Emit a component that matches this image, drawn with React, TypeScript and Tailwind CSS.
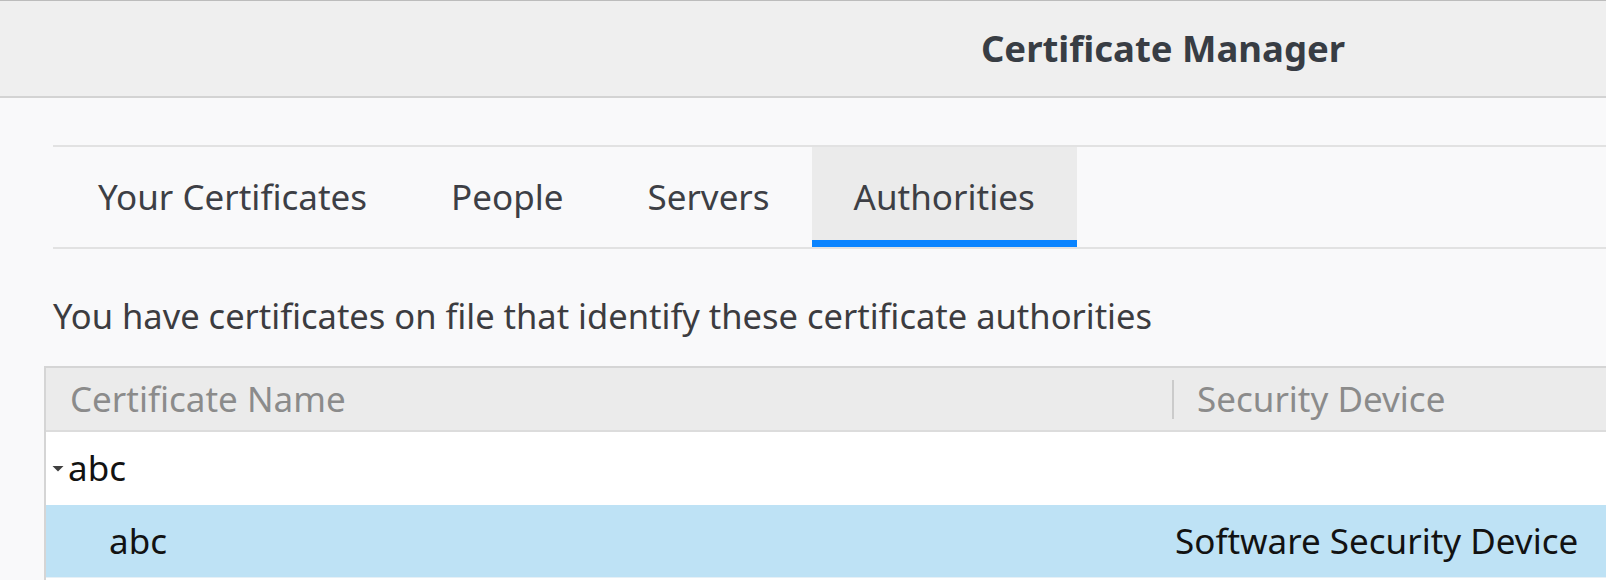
import { useState } from 'react'

const tabs = ['Your Certificates', 'People', 'Servers', 'Authorities']

function Twisty() {
  return (
    <svg width="12" height="7" viewBox="0 0 12 7" className="shrink-0">
      <path d="M0.5 1 L11.5 1 L6 6.5 Z" fill="#3f3f3f" />
    </svg>
  )
}

export default function App() {
  const [active, setActive] = useState('Authorities')

  return (
    <div className="h-[580px] w-full overflow-hidden bg-[#f9f9fa] font-['Noto_Sans','Open_Sans',sans-serif]">
      <div className="w-[2326px]">
        <header className="flex h-[98px] items-center justify-center border-t border-b-2 border-t-[#bcbcbc] border-b-[#d3d3d3] bg-[#efefef]">
          <h1 className="text-[36.5px] font-bold text-[#383d44]">Certificate Manager</h1>
        </header>

        <main className="pt-[47px]">
          <nav className="ml-[53px] flex border-y-2 border-[#e2e2e2]">
            {tabs.map(t => (
              <button key={t} onClick={() => setActive(t)}
                className={`flex h-[100px] items-center border-b-[7px] px-[42px] pt-[7px] text-[35px] text-[#3d3f45] first:pl-[45px] ${active === t ? 'border-[#0a84ff] bg-[#ebebeb]' : 'border-transparent'}`}>
                {t}
              </button>
            ))}
          </nav>

          <p className="ml-[53px] mt-[40px] flex h-[53px] items-center text-[34.5px] text-[#3c3c40]">
            You have certificates on file that identify these certificate authorities
          </p>

          <div className="ml-[44px] mt-[24px] border-l-2 border-t-2 border-[#d5d5d5] bg-white">
            <div className="flex h-[64px] items-center border-b-2 border-[#dcdcdc] bg-[#ebebeb] text-[35px] text-[#8b8b8b]">
              <div className="w-[1126px] pl-[24px]">Certificate Name</div>
              <div className="h-[39px] w-[2px] bg-[#cbcbcb]" />
              <div className="pl-[23px]">Security Device</div>
            </div>

            <div className="flex h-[73px] items-center text-[35px] text-[#121212]">
              <div className="flex w-[1128px] items-center pl-[6px]">
                <Twisty />
                <span className="ml-[4px]">abc</span>
              </div>
            </div>

            <div className="flex h-[72px] items-center bg-[#bee2f5] text-[35px] text-[#121212]">
              <div className="w-[1128px] pl-[63px]">abc</div>
              <div className="pl-[1px]">Software Security Device</div>
            </div>

            <div className="h-[20px] border-t border-[#e6f0f6] bg-white" />
          </div>
        </main>
      </div>
    </div>
  )
}
